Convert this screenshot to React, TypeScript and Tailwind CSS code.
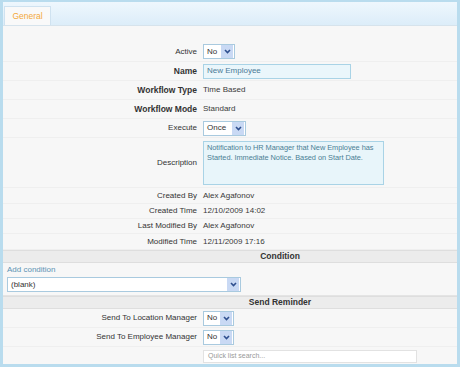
import React from 'react';

const font = { fontFamily: '"Liberation Sans", Arial, sans-serif' };

const Chevron: React.FC = () => (
  <svg width="7" height="5" viewBox="0 0 7 5">
    <polyline points="1,1 3.5,3.5 6,1" fill="none" stroke="#2f4f8f" strokeWidth="1.6" />
  </svg>
);

const Select: React.FC<{ value: string; width: string }> = ({ value, width }) => (
  <div className={`flex h-[15px] items-center border border-[#a9cadf] bg-white ${width}`}>
    <span className="flex-1 truncate pl-[3px] text-[8px] text-[#333]">{value}</span>
    <span className="mr-[1px] flex h-[13px] w-[12px] items-center justify-center bg-[#c9d9f4]">
      <Chevron />
    </span>
  </div>
);

const Row: React.FC<{ label: string; bold?: boolean; h: string; children: React.ReactNode }> = ({
  label,
  bold,
  h,
  children,
}) => (
  <div className={`grid grid-cols-[194px_1fr] items-center gap-x-[6px] border-b border-[#efefef] ${h}`}>
    <div className={`text-right text-[#333] ${bold ? 'text-[8.5px] font-bold' : 'text-[8px]'}`}>{label}</div>
    <div className="flex items-center text-[8px] text-[#3a3a3a]">{children}</div>
  </div>
);

const Header: React.FC<{ title: string }> = ({ title }) => (
  <div className="h-[13px] border-y border-[#dedede] bg-[#ececec] pl-[100px] text-center text-[8.5px] font-bold leading-[11px] text-[#333]">
    {title}
  </div>
);

export default function App() {
  return (
    <div style={font} className="h-[367px] w-[460px] overflow-hidden bg-[#b9dcee] pt-[2px] pl-[3px] pr-[3px] pb-[3px]">
      <div className="h-full overflow-hidden bg-[#f7f7f7]">
        {/* Tabs */}
        <div className="flex h-[24px] items-end border-b border-[#d6e3ec] bg-gradient-to-b from-[#eef7fd] to-[#dcedf9] pl-[1px]">
          <div className="flex h-[19px] w-[47px] items-center justify-center border border-b-0 border-[#cfe2f0] bg-[#f9f9f9] text-[8.5px] text-[#f3a83a]">
            General
          </div>
        </div>

        {/* Form */}
        <div className="pt-[16px]">
          <Row label="Active" h="h-[20px]">
            <Select value="No" width="w-[32px]" />
          </Row>
          <Row label="Name" bold h="h-[19px]">
            <div className="flex h-[15px] w-[148px] items-center border border-[#a9d3e6] bg-[#eaf6fb] pl-[3px] text-[8px] text-[#4a7a96]">
              New Employee
            </div>
          </Row>
          <Row label="Workflow Type" bold h="h-[19px]">
            Time Based
          </Row>
          <Row label="Workflow Mode" bold h="h-[19px]">
            Standard
          </Row>
          <Row label="Execute" h="h-[19px]">
            <Select value="Once" width="w-[43px]" />
          </Row>
          <Row label="Description" h="h-[50px]">
            <div className="h-[44px] w-[181px] border border-[#a9d3e6] bg-[#e8f5fa] px-[3px] pt-[1px] text-[7.4px] leading-[10px] tracking-[-0.05px] text-[#4b7f95]">
              Notification to HR Manager that New Employee has Started. Immediate Notice. Based on Start Date.
            </div>
          </Row>
          <Row label="Created By" h="h-[16px]">
            Alex Agafonov
          </Row>
          <Row label="Created Time" h="h-[15px]">
            12/10/2009 14:02
          </Row>
          <Row label="Last Modified By" h="h-[15px]">
            Alex Agafonov
          </Row>
          <Row label="Modified Time" h="h-[16px]">
            12/11/2009 17:16
          </Row>
        </div>

        <Header title="Condition" />
        <div className="border-b border-[#e4e4e4] pl-[4px] pb-[3px]">
          <div className="h-[14px] text-[8px] leading-[14px] text-[#5b93b4]">Add condition</div>
          <Select value="(blank)" width="w-[234px]" />
        </div>

        <Header title="Send Reminder" />
        <Row label="Send To Location Manager" h="h-[19px]">
          <Select value="No" width="w-[31px]" />
        </Row>
        <Row label="Send To Employee Manager" h="h-[19px]">
          <Select value="No" width="w-[31px]" />
        </Row>
        <div className="grid grid-cols-[194px_1fr] items-center gap-x-[6px] pt-[3px]">
          <div />
          <div className="flex h-[13px] w-[214px] items-center border border-[#e2e2e2] bg-white pl-[4px] text-[7px] text-[#999]">
            Quick list search...
          </div>
        </div>
      </div>
    </div>
  );
}
